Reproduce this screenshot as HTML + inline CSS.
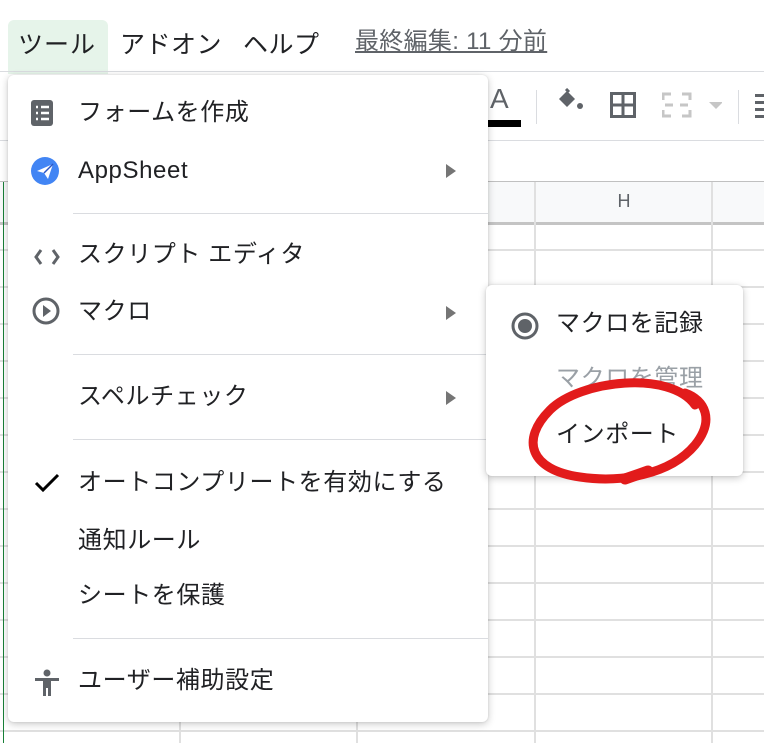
<!DOCTYPE html>
<html><head><meta charset="utf-8"><style>
*{margin:0;padding:0;box-sizing:border-box}
body{width:764px;height:743px;overflow:hidden;background:#fff;position:relative;font-family:"Liberation Sans","Noto Sans CJK JP",sans-serif;color:#202124}
.abs{position:absolute}
.hl{position:absolute;height:2px;background:#e0e0e0;left:0;width:764px}
.vl{position:absolute;width:2px;background:#e0e0e0}
.menu{position:absolute;background:#fff;border-radius:6px;box-shadow:0 2px 8px rgba(0,0,0,.22),0 0 2px rgba(0,0,0,.1)}
.it{position:absolute;left:70px;font-size:24px;line-height:30px;white-space:nowrap;letter-spacing:0.6px}
.sep{position:absolute;left:65px;right:0;height:1px;background:#dadce0}
.arr{position:absolute;left:438px;width:0;height:0;border-left:10px solid #757575;border-top:7px solid transparent;border-bottom:7px solid transparent}
</style></head><body>
<div class="abs" style="left:8px;top:20px;width:100px;height:54px;background:#e6f4ea;border-radius:6px 6px 0 0"></div>
<div class="abs" style="left:18px;top:28px;font-size:25px;line-height:34px;letter-spacing:1px">ツール</div>
<div class="abs" style="left:120px;top:28px;font-size:25px;line-height:34px;letter-spacing:0.5px">アドオン</div>
<div class="abs" style="left:243px;top:28px;font-size:25px;line-height:34px;letter-spacing:0.5px">ヘルプ</div>
<div class="abs" style="left:355px;top:27px;font-size:24px;line-height:30px;color:#5f6368;text-decoration:underline;letter-spacing:0.3px">最終編集: 11 分前</div>
<div class="hl" style="top:71px;height:1px;background:#dadce0"></div>
<div class="abs" style="left:490px;top:84px;font-size:28px;color:#5f6368;line-height:30px">A</div>
<div class="abs" style="left:488px;top:120px;width:33px;height:7px;background:#000"></div>
<div class="abs" style="left:536px;top:90px;width:1px;height:34px;background:#dadce0"></div>
<svg class="abs" style="left:556px;top:88px" width="30" height="26" viewBox="0 0 30 26"><path d="M3 11 L11 3 L19 11 L11 19 Z" fill="#5f6368"/><path d="M10 1 L13 4" stroke="#5f6368" stroke-width="3"/><circle cx="24" cy="18" r="3" fill="#5f6368"/></svg>
<svg class="abs" style="left:610px;top:92px" width="26" height="26"><rect x="1.5" y="1.5" width="23" height="23" fill="none" stroke="#5f6368" stroke-width="3"/><path d="M13 1v24M1 13h24" stroke="#5f6368" stroke-width="3"/></svg>
<svg class="abs" style="left:662px;top:92px" width="60" height="26"><path d="M1 8V2h8M1 18v6h8M28 8V2h-8M28 18v6h-8M3 13h8M26 13h-8" stroke="#c6c6c6" stroke-width="3" fill="none"/><path d="M47 10h14l-7 7z" fill="#c6c6c6"/></svg>
<div class="abs" style="left:738px;top:90px;width:1px;height:34px;background:#dadce0"></div>
<div class="abs" style="left:755px;top:94px;width:9px;height:24px;background:repeating-linear-gradient(#5f6368 0 3px,transparent 3px 7px)"></div>
<div class="hl" style="top:140px;height:1px;background:#dadce0"></div>
<div class="abs" style="left:0;top:182px;width:764px;height:41px;background:#f8f9fa"></div>
<div class="hl" style="top:181px;height:1px;background:#c0c0c0"></div>
<div class="hl" style="top:222px;height:3px;background:#c4c4c4"></div>
<div class="abs" style="left:536px;top:191px;width:176px;text-align:center;font-size:18px;color:#5f6368">H</div>
<div class="hl" style="top:249px"></div><div class="hl" style="top:286px"></div><div class="hl" style="top:323px"></div><div class="hl" style="top:360px"></div><div class="hl" style="top:397px"></div><div class="hl" style="top:434px"></div><div class="hl" style="top:471px"></div><div class="hl" style="top:508px"></div><div class="hl" style="top:545px"></div><div class="hl" style="top:582px"></div><div class="hl" style="top:619px"></div><div class="hl" style="top:656px"></div><div class="hl" style="top:693px"></div><div class="hl" style="top:730px"></div>
<div class="vl" style="left:534px;top:182px;height:561px"></div>
<div class="vl" style="left:711px;top:182px;height:561px"></div>
<div class="vl" style="left:179px;top:182px;height:561px"></div>
<div class="vl" style="left:356px;top:182px;height:561px"></div>
<div class="abs" style="left:3px;top:182px;width:1px;height:561px;background:#188038"></div>
<div class="menu" style="left:8px;top:75px;width:480px;height:647px">
 <svg class="abs" style="left:23px;top:25px" width="22" height="26"><rect width="22" height="26" rx="3" fill="#5f6368"/><path d="M5 7h2M10 7h8M5 13h2M10 13h8M5 19h2M10 19h8" stroke="#fff" stroke-width="2.5"/></svg>
 <div class="it" style="top:23px">フォームを作成</div>
 <svg class="abs" style="left:23px;top:82px" width="28" height="28"><circle cx="14" cy="14" r="14" fill="#4285f4"/><path d="M6 14 L22 7 L17 22 L13 16 Z" fill="#fff"/><path d="M13 16 L22 7" stroke="#2a56c6" stroke-width="1.5"/></svg>
 <div class="it" style="top:81px">AppSheet</div>
 <div class="arr" style="top:89px"></div>
 <div class="sep" style="top:138px"></div>
 <svg class="abs" style="left:26px;top:170px" width="28" height="24"><path d="M7 5L2 12L7 19M19 5L24 12L19 19" stroke="#5f6368" stroke-width="3" fill="none"/></svg>
 <div class="it" style="top:165px">スクリプト エディタ</div>
 <svg class="abs" style="left:24px;top:222px" width="28" height="28"><circle cx="14" cy="14" r="12" fill="none" stroke="#5f6368" stroke-width="3"/><path d="M11 8L19 14L11 20Z" fill="#5f6368"/></svg>
 <div class="it" style="top:222px">マクロ</div>
 <div class="arr" style="top:231px"></div>
 <div class="sep" style="top:279px"></div>
 <div class="it" style="top:307px">スペルチェック</div>
 <div class="arr" style="top:316px"></div>
 <div class="sep" style="top:364px"></div>
 <svg class="abs" style="left:26px;top:397px" width="26" height="22"><path d="M2 11L9 18L24 3" stroke="#000" stroke-width="3" fill="none"/></svg>
 <div class="it" style="top:393px">オートコンプリートを有効にする</div>
 <div class="it" style="top:451px">通知ルール</div>
 <div class="it" style="top:506px">シートを保護</div>
 <div class="sep" style="top:563px"></div>
 <svg class="abs" style="left:26px;top:594px" width="26" height="28"><circle cx="13" cy="4" r="3.5" fill="#5f6368"/><path d="M1 9h24v3h-8v15h-3v-8h-2v8H9V12H1z" fill="#5f6368"/></svg>
 <div class="it" style="top:591px">ユーザー補助設定</div>
</div>
<div class="menu" style="left:486px;top:285px;width:257px;height:191px">
 <svg class="abs" style="left:24px;top:26px" width="30" height="30"><circle cx="15" cy="15" r="12" fill="none" stroke="#5f6368" stroke-width="3"/><circle cx="15" cy="15" r="7" fill="#5f6368"/></svg>
 <div class="it" style="left:70px;top:24px">マクロを記録</div>
 <div class="it" style="left:70px;top:79px;color:#9aa0a6">マクロを管理</div>
 <div class="it" style="left:70px;top:135px">インポート</div>
</div>
<svg class="abs" style="left:520px;top:375px" width="200" height="120" viewBox="0 0 200 120"><path d="M175 30 C150 -5 60 5 30 35 C0 65 10 95 60 102 C100 108 150 100 175 70 C195 45 185 25 165 18" fill="none" stroke="#e21b1b" stroke-width="9" stroke-linecap="round"/><path d="M105 104 L128 96" stroke="#e21b1b" stroke-width="11" stroke-linecap="round"/></svg>
</body></html>
